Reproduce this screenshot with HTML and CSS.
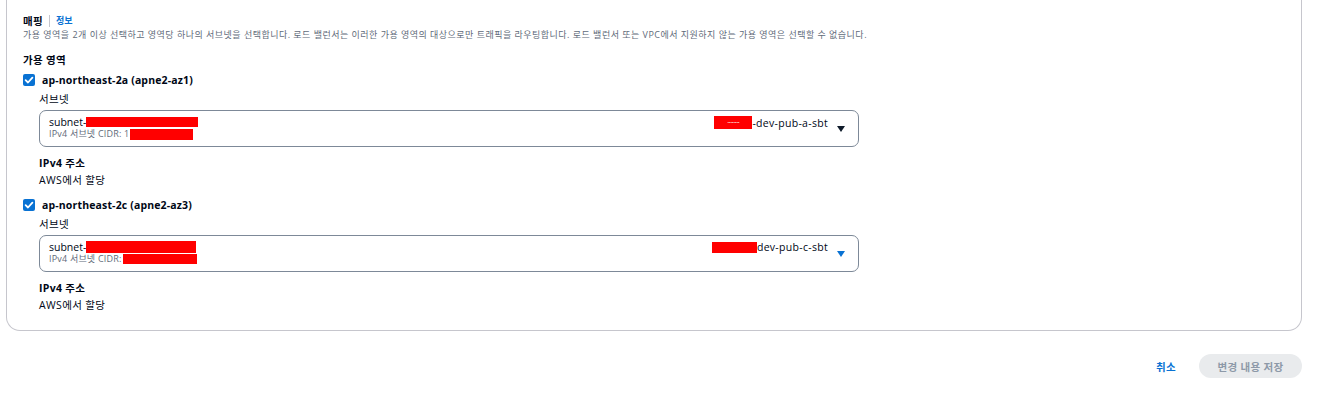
FILE: index.html
```html
<!DOCTYPE html>
<html lang="ko">
<head>
<meta charset="utf-8">
<title>매핑</title>
<link rel="stylesheet" href="styles.css">
</head>
<body>
<div class="card">
  <div class="heading-row">
    <span class="heading">매핑</span>
    <span class="sep"></span>
    <a class="info">정보</a>
  </div>
  <div class="desc">가용 영역을 2개 이상 선택하고 영역당 하나의 서브넷을 선택합니다. 로드 밸런서는 이러한 가용 영역의 대상으로만 트래픽을 라우팅합니다. 로드 밸런서 또는 VPC에서 지원하지 않는 가용 영역은 선택할 수 없습니다.</div>
  <div class="section-label">가용 영역</div>

  <div class="az">
    <div class="az-row">
      <span class="checkbox"><svg viewBox="0 0 12 12" width="12" height="12"><path d="M2.6 6.2 L5 8.5 L9.4 3.6" fill="none" stroke="#fff" stroke-width="1.8" stroke-linecap="round" stroke-linejoin="round"/></svg></span>
      <span class="az-name">ap-northeast-2a (apne2-az1)</span>
    </div>
    <div class="az-body">
      <div class="field-label">서브넷</div>
      <div class="select">
        <div class="sel-main">
          <div class="line1">subnet-<span class="redact r-a1"></span></div>
          <div class="line2">IPv4 서브넷 CIDR: 1<span class="redact r-a2"></span></div>
        </div>
        <div class="sel-tag"><span class="redact r-a3"><span class="dots">••••••••</span></span>-dev-pub-a-sbt</div>
        <svg class="caret" viewBox="0 0 8 6" width="8" height="6"><path d="M0 0 H8 L4 6 Z" fill="#0f1b2a"/></svg>
      </div>
      <div class="field-label bold ip">IPv4 주소</div>
      <div class="field-value">AWS에서 할당</div>
    </div>
  </div>

  <div class="az second">
    <div class="az-row">
      <span class="checkbox"><svg viewBox="0 0 12 12" width="12" height="12"><path d="M2.6 6.2 L5 8.5 L9.4 3.6" fill="none" stroke="#fff" stroke-width="1.8" stroke-linecap="round" stroke-linejoin="round"/></svg></span>
      <span class="az-name">ap-northeast-2c (apne2-az3)</span>
    </div>
    <div class="az-body">
      <div class="field-label">서브넷</div>
      <div class="select">
        <div class="sel-main">
          <div class="line1">subnet-<span class="redact r-c1"></span></div>
          <div class="line2">IPv4 서브넷 CIDR:<span class="redact r-c2"></span></div>
        </div>
        <div class="sel-tag"><span class="redact r-c3"></span>dev-pub-c-sbt</div>
        <svg class="caret" viewBox="0 0 8 6" width="8" height="6"><path d="M0 0 H8 L4 6 Z" fill="#0972d3"/></svg>
      </div>
      <div class="field-label bold ip">IPv4 주소</div>
      <div class="field-value">AWS에서 할당</div>
    </div>
  </div>
</div>

<div class="actions">
  <button class="btn-link">취소</button>
  <button class="btn-primary" disabled>변경 내용 저장</button>
</div>
</body>
</html>
```

FILE: styles.css
```css
* { box-sizing: border-box; }
html, body { margin: 0; padding: 0; background: #ffffff; }
body {
  font-family: "Open Sans", "Noto Sans CJK KR", sans-serif;
  color: #000716;
  font-size: 10.5px;
  line-height: 16px;
  width: 1331px;
  height: 403px;
  overflow: hidden;
}

.card {
  margin: -12px 29px 0 6px;
  border: 1px solid #c6c6cd;
  border-radius: 0 0 14px 14px;
  border-top: none;
  padding: 25px 16px 17px 16px;
}

.heading-row {
  display: flex;
  align-items: center;
  height: 16px;
}
.heading { font-weight: 700; font-size: 10.5px; letter-spacing: 0.3px; }
.sep {
  width: 1px;
  height: 12px;
  background: #c6c6cd;
  margin: 0 6px 0 6px;
}
.info {
  color: #0972d3;
  font-weight: 700;
  font-size: 9px;
}

.desc {
  font-size: 9px;
  line-height: 12px;
  color: #5f6b7a;
  letter-spacing: 0.48px;
}

.section-label {
  margin-top: 11px;
  font-weight: 700;
  line-height: 16px;
  letter-spacing: 0.3px;
}

.az { margin-top: 4px; }
.az.second { margin-top: 9px; }

.az-row {
  display: flex;
  align-items: center;
  height: 16px;
}
.checkbox {
  width: 12px;
  height: 12px;
  border-radius: 2px;
  background: #0972d3;
  display: flex;
  margin-right: 7px;
}
.checkbox svg { display: block; }
.az-name { font-weight: 700; letter-spacing: 0.15px; }

.az-body { padding-left: 16px; }
.field-label { margin-top: 3px; line-height: 16px; letter-spacing: 0.3px; }
.field-label.bold { font-weight: 700; }
.field-label.ip { margin-top: 8px; }
.field-value { margin-top: 1px; line-height: 16px; letter-spacing: 0.35px; }

.select {
  margin-top: 3px;
  width: 820px;
  height: 37px;
  border: 1px solid #7d8998;
  border-radius: 7px;
  padding: 5px 13px 6px 9px;
  display: flex;
  align-items: center;
}
.sel-main { flex: 1; }
.line1 { line-height: 12px; display: flex; align-items: center; }
.line2 {
  line-height: 12px;
  font-size: 9px;
  color: #5f6b7a;
  letter-spacing: 0.2px;
  display: flex;
  align-items: center;
}
.sel-tag {
  align-self: flex-start;
  line-height: 12px;
  display: flex;
  align-items: center;
  margin-right: 9px;
  letter-spacing: 0.3px;
}
.caret { display: block; margin-top: 1px; }

.redact { display: inline-block; background: #ff0000; }
.r-a1 { width: 112px; height: 10px; }
.r-a2 { width: 63px; height: 11px; margin-left: 1px; }
.r-a3 { width: 38px; height: 13px; display: inline-flex; align-items: center; justify-content: center; }
.dots { color: #fff; font-size: 4px; letter-spacing: 0; line-height: 4px; }
.r-c1 { width: 110px; height: 12px; }
.r-c2 { width: 74px; height: 10px; margin-left: 1px; }
.r-c3 { width: 45px; height: 11px; }

.actions {
  display: flex;
  justify-content: flex-end;
  align-items: center;
  margin: 23px 29px 0 0;
  gap: 18px;
}
.btn-link {
  font-family: inherit;
  border: none;
  background: none;
  color: #0972d3;
  font-weight: 700;
  font-size: 10.5px;
  letter-spacing: 0.3px;
  padding: 0 5px;
  height: 24px;
}
.btn-primary {
  font-family: inherit;
  border: none;
  background: #e9ebed;
  color: #8d99a8;
  font-weight: 700;
  font-size: 10.5px;
  letter-spacing: 0.3px;
  height: 24px;
  width: 103px;
  border-radius: 12px;
  padding: 0;
}
```
